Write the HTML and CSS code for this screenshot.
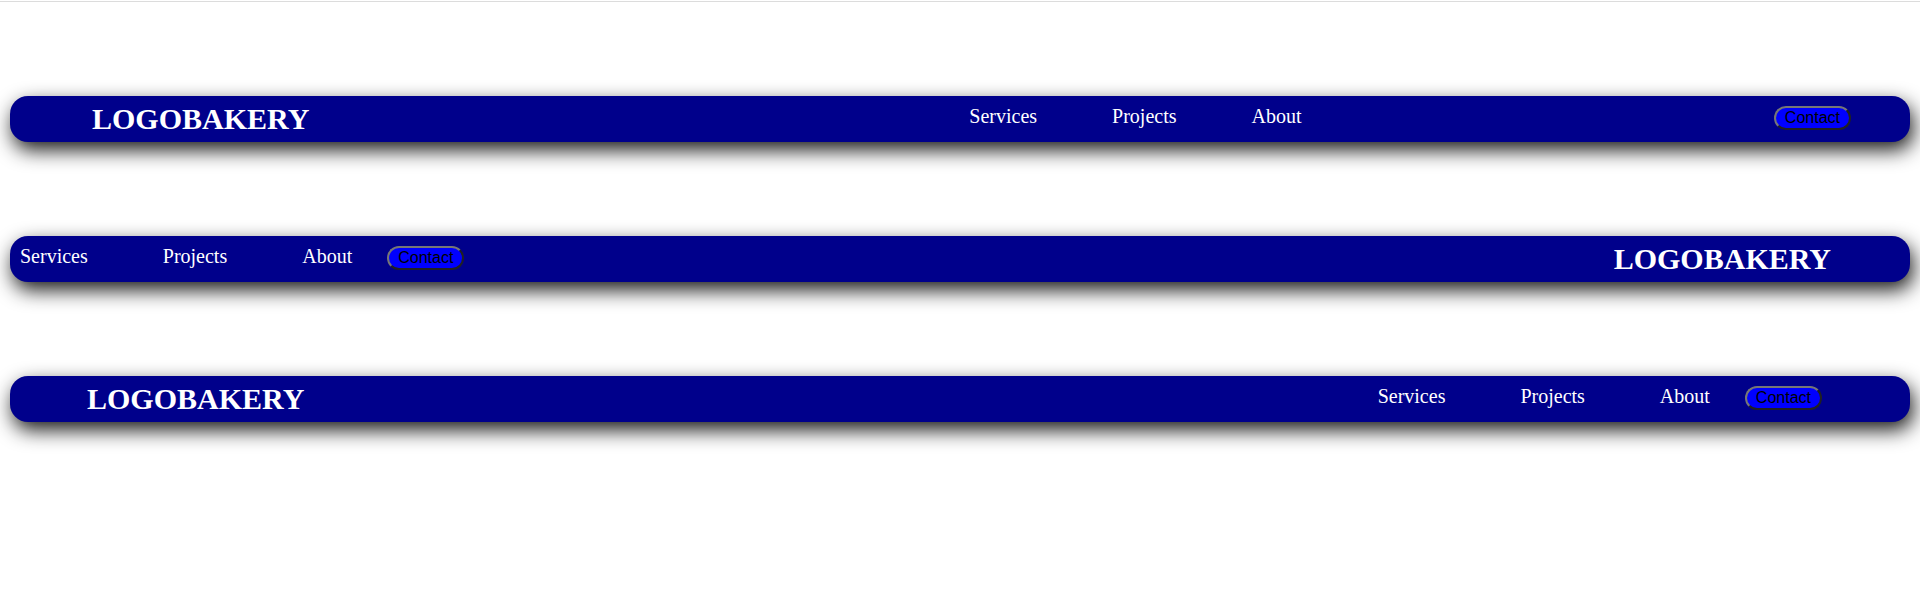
FILE: index.html
```html
<!DOCTYPE html>
<html lang="en">
<head>
<meta charset="utf-8">
<title>Navbars</title>
<link rel="stylesheet" href="styles.css">
</head>
<body>
<div class="topline"></div>
<main class="stack">
  <header class="bar bar-one">
    <div class="logo">LOGOBAKERY</div>
    <nav class="links links-one">
      <a href="#">Services</a>
      <a href="#">Projects</a>
      <a href="#">About</a>
    </nav>
    <button class="cta cta-one">Contact</button>
  </header>

  <header class="bar bar-two">
    <nav class="links">
      <a href="#">Services</a>
      <a href="#">Projects</a>
      <a href="#">About</a>
    </nav>
    <button class="cta cta-two">Contact</button>
    <div class="logo logo-two">LOGOBAKERY</div>
  </header>

  <header class="bar bar-three">
    <div class="logo">LOGOBAKERY</div>
    <nav class="links links-three">
      <a href="#">Services</a>
      <a href="#">Projects</a>
      <a href="#">About</a>
    </nav>
    <button class="cta cta-three">Contact</button>
  </header>
</main>
</body>
</html>
```
FILE: styles.css
```css
html, body {
  margin: 0;
  padding: 0;
  background: #ffffff;
}

body {
  font-family: "Liberation Serif", "Times New Roman", serif;
  min-height: 100vh;
}

.topline {
  margin-top: 1px;
  height: 1px;
  background: #dcdcdc;
}

.stack {
  display: flex;
  flex-direction: column;
  gap: 94px;
  padding: 94px 10px 120px 10px;
}

.bar {
  display: flex;
  align-items: center;
  height: 46px;
  background: #00008b;
  border-radius: 18px;
  box-shadow: 3px 8px 20px rgba(0, 0, 0, 0.9);
  box-sizing: border-box;
}

.logo {
  color: #ffffff;
  font-weight: bold;
  font-size: 30px;
  line-height: 34px;
  white-space: nowrap;
}

.links {
  display: flex;
  gap: 75px;
  padding-bottom: 5px;
}

.links a {
  color: #ffffff;
  text-decoration: none;
  font-size: 20px;
  line-height: 23px;
}

.cta {
  font-family: "Liberation Sans", Arial, sans-serif;
  font-size: 16px;
  color: #000000;
  background: #0000ff;
  border: 2px outset #767676;
  border-radius: 12px;
  padding: 1px 9px;
  margin-bottom: 2px;
  line-height: normal;
}

/* bar one */
.bar-one {
  padding: 0 59px 0 82px;
}
.links-one {
  margin-left: 660px;
}
.cta-one {
  margin-left: auto;
}

/* bar two */
.bar-two {
  padding: 0 79px 0 10px;
}
.cta-two {
  margin-left: 35px;
}
.logo-two {
  margin-left: auto;
}

/* bar three */
.bar-three {
  padding: 0 88px 0 77px;
}
.links-three {
  margin-left: auto;
}
.cta-three {
  margin-left: 35px;
}
```
